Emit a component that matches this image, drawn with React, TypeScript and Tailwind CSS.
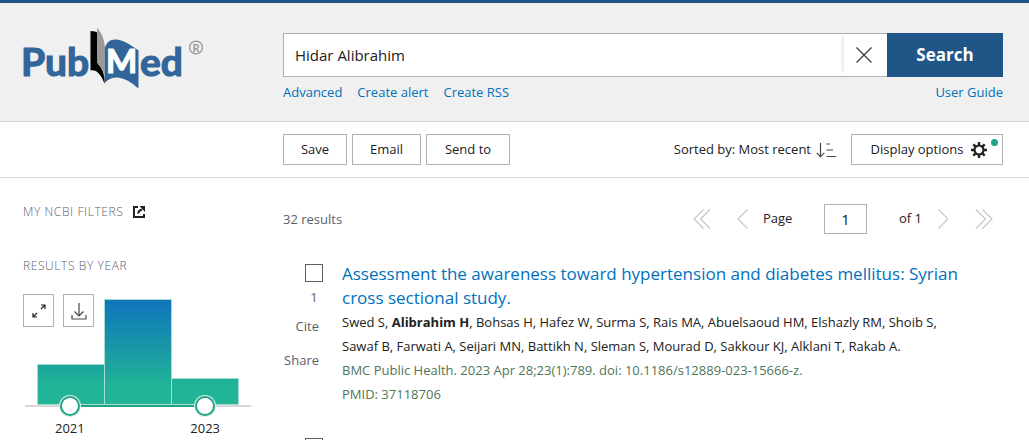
import { useState } from "react";
import { clsx } from "clsx";

const YEARS = [
  { year: 2021, height: 40 },
  { year: 2022, height: 105 },
  { year: 2023, height: 26 },
];

const THUMB =
  "pointer-events-none absolute top-[102px] left-[37px] m-0 h-5 w-[155px] appearance-none bg-transparent [&::-webkit-slider-thumb]:pointer-events-auto [&::-webkit-slider-thumb]:size-5 [&::-webkit-slider-thumb]:appearance-none [&::-webkit-slider-thumb]:rounded-full [&::-webkit-slider-thumb]:border-2 [&::-webkit-slider-thumb]:border-[#20a386] [&::-webkit-slider-thumb]:bg-white [&::-webkit-slider-thumb]:shadow-[0_0_0_1px_#d5eee8]";

const Logo = () => (
  <svg width="188" height="62" viewBox="18 27 188 62" aria-label="PubMed">
    <g fontFamily="Lato, sans-serif" fontWeight="700">
      <text x="21" y="76" fontSize="39" fill="#326599" stroke="#326599" strokeWidth="1.200">
        Pub
      </text>
      <text x="140" y="76" fontSize="39" fill="#326599" stroke="#326599" strokeWidth="1.200">
        ed
      </text>
      <path
        d="M104.500 50C106 41 112 38.500 119 40C127 42 132 46 138.500 50.500V88.500C128 79 115 72 104.500 83Z"
        fill="#326599"
      />
      <text x="106" y="73" fontSize="33" fill="#fff" stroke="#fff" strokeWidth="1.200">
        M
      </text>
      <path d="M90.500 31Q96 31 98 33V64C102 68 105 74 104.500 84C102 76 97 69 90.500 70.500Z" fill="#000" />
      <path d="M97 28C102 33 104 39 105 48V76C103 70 100 65 97 63Z" fill="#999" />
      <circle cx="196" cy="47.500" r="6.400" fill="none" stroke="#999" strokeWidth="1.300" />
      <text x="192.500" y="51.500" fontSize="11" fill="#999">
        R
      </text>
    </g>
  </svg>
);

const Header = () => {
  const [term, setTerm] = useState("Hidar Alibrahim");

  return (
    <header className="grid grid-cols-[260px_1fr] border-t-3 border-b border-t-[#205588] border-b-[#d6d7d9] bg-[#f0f0f0] pr-[26px] pb-[18px] pl-[23px]">
      <a href="#home" className="-ml-[5px] pt-6">
        <Logo />
      </a>
      <div className="pt-[30px]">
        <form className="flex h-11" onSubmit={(e) => e.preventDefault()}>
          <div className="flex min-w-0 flex-1 border border-r-0 border-[#aeb0b5] bg-white">
            <input
              aria-label="Search PubMed"
              value={term}
              onChange={(e) => setTerm(e.target.value)}
              className="min-w-0 flex-1 px-[11px] text-[15px] outline-none"
            />
            <button
              type="button"
              aria-label="Clear search"
              onClick={() => setTerm("")}
              className="flex w-[43px] items-center justify-center pr-1 shadow-[-4px_0_4px_-3px_#ddd]"
            >
              <svg width="16" height="16" viewBox="0 0 16 16" stroke="#323a45" strokeWidth="1.200">
                <path d="M.5.5l15 15M15.500.5l-15 15" />
              </svg>
            </button>
          </div>
          <button className="w-[116px] bg-[#205588] text-[17px] font-bold text-white">Search</button>
        </form>
        <nav className="mt-1 flex gap-[15px] text-[13px] leading-[22px] text-[#0071bc]">
          <a href="#advanced">Advanced</a>
          <a href="#alert">Create alert</a>
          <a href="#rss">Create RSS</a>
          <a href="#guide" className="ml-auto">
            User Guide
          </a>
        </nav>
      </div>
    </header>
  );
};

const ToolbarButton = ({ label, className }: { label: string; className: string }) => (
  <button className={clsx("h-[31px] border border-[#aeb0b5]", className)}>{label}</button>
);

const Gear = () => (
  <svg width="16" height="16" viewBox="-8 -8 16 16" fill="none" stroke="#212121">
    <circle r="4.500" strokeWidth="2.200" />
    <path
      strokeWidth="2.400"
      d="M0-5V-8M0 5V8M-5 0H-8M5 0H8M3.600-3.600L5.700-5.700M-3.600-3.600L-5.700-5.700M3.600 3.600L5.700 5.700M-3.600 3.600L-5.700 5.700"
    />
  </svg>
);

const Toolbar = () => (
  <div className="flex items-center gap-[5px] border-b border-[#d6d7d9] py-3 pr-[26px] pl-[283px] text-[13px]">
    <ToolbarButton label="Save" className="w-16" />
    <ToolbarButton label="Email" className="w-[69px]" />
    <ToolbarButton label="Send to" className="w-[84px]" />
    <button className="mr-[10px] ml-auto flex items-center gap-[5px]">
      Sorted by: Most recent
      <svg width="20" height="16" viewBox="0 0 20 16" fill="none" stroke="#444" strokeWidth="1.200">
        <path d="M4.500 1V14.500M.7 10.800L4.500 14.600L8.300 10.800M10.500 2H14M10.500 8H17M10.500 14.500H20" />
      </svg>
    </button>
    <button className="relative flex h-[31px] w-[152px] items-center justify-center gap-2 border border-[#aeb0b5] pl-1">
      Display options
      <Gear />
      <span className="absolute top-1 right-1 size-[7px] rounded-full bg-[#20a386]" />
    </button>
  </div>
);

const YearChart = () => {
  const [range, setRange] = useState([2021, 2023]);

  return (
    <div className="relative mt-[18px] w-[229px]">
      <svg width="229" height="120" viewBox="0 0 229 120" className="block">
        <defs>
          <linearGradient id="bars" gradientUnits="userSpaceOnUse" x1="0" y1="6" x2="0" y2="111">
            <stop offset="0" stopColor="#0f75bc" />
            <stop offset=".8" stopColor="#20b297" />
            <stop offset="1" stopColor="#22b796" />
          </linearGradient>
        </defs>
        {YEARS.map(({ year, height }, i) => (
          <rect
            key={year}
            x={14.5 + i * 67}
            y={110.5 - height}
            width="67"
            height={height}
            fill="url(#bars)"
            stroke="#a5dcd4"
          />
        ))}
        <path d="M2 112H228" stroke="#d6d7d9" strokeWidth="2" />
        <path d="M47 112H182" stroke="#20a386" strokeWidth="2" />
      </svg>
      <div className="absolute top-0 left-0 flex gap-[9px]">
        <button aria-label="Expand" className="flex h-[33px] w-[31px] items-center justify-center border border-[#aeb0b5]">
          <svg width="14" height="14" viewBox="0 0 14 14" fill="none" stroke="#212121" strokeWidth="1.200">
            <path d="M9 1H13V5M13 1L9 5M1 9V13H5M1 13L5 9" />
          </svg>
        </button>
        <button aria-label="Download" className="flex h-[33px] w-[31px] items-center justify-center border border-[#aeb0b5]">
          <svg width="16" height="18" viewBox="0 0 16 18" fill="none" stroke="#444" strokeWidth="1.200">
            <path d="M8 1V14M3.500 9.500L8 14L12.500 9.500M1 13V17H15V13" />
          </svg>
        </button>
      </div>
      <input
        type="range"
        aria-label="From year"
        min={2021}
        max={2023}
        value={range[0]}
        onChange={(e) => setRange([Number(e.target.value), range[1]])}
        className={THUMB}
      />
      <input
        type="range"
        aria-label="To year"
        min={2021}
        max={2023}
        value={range[1]}
        onChange={(e) => setRange([range[0], Number(e.target.value)])}
        className={THUMB}
      />
      <div className="flex justify-between pt-1 pr-8 pl-8 text-[13px] leading-5">
        <span>{range[0]}</span>
        <span>{range[1]}</span>
      </div>
    </div>
  );
};

const Sidebar = () => (
  <aside className="pt-6 text-[#5b616b]">
    <a href="#filters" className="flex items-center gap-[10px] text-[12px] leading-5 font-light tracking-wider">
      MY NCBI FILTERS
      <svg width="12" height="12" viewBox="0 0 12 12" fill="none" stroke="#212121" strokeWidth="2">
        <path d="M5 1H1V11H11V8" />
        <path d="M5 7.500Q5.500 4.500 9 3.500" />
        <path d="M6.500 0H12V6Z" fill="#212121" stroke="none" />
      </svg>
    </a>
    <h3 className="mt-[34px] text-[12px] leading-5 font-light tracking-wider">RESULTS BY YEAR</h3>
    <div className="text-[#212121]">
      <YearChart />
    </div>
  </aside>
);

const Arrow = ({ label, d, className }: { label: string; d: string; className: string }) => (
  <button aria-label={label} className={className}>
    <svg width="18" height="20" viewBox="0 0 18 20" fill="none" stroke="#c4c6ca" strokeWidth="1.200">
      <path d={d} />
    </svg>
  </button>
);

const Pager = () => (
  <div className="flex items-center text-[13px] text-[#212121]">
    <Arrow label="First page" d="M10.500.5L1 10L10.500 19.500M17 .5L7.500 10L17 19.500" className="mr-[26px]" />
    <Arrow label="Previous page" d="M10.500.5L1 10L10.500 19.500" className="mr-2" />
    <label htmlFor="page" className="w-[61px]">
      Page
    </label>
    <input
      id="page"
      defaultValue="1"
      className="h-[30px] w-[43px] border border-[#aeb0b5] text-center text-[15px] outline-none"
    />
    <span className="w-[63px] pr-2 text-right">of 1</span>
    <Arrow label="Next page" d="M8.500.5L18 10L8.500 19.500" className="mr-[27px]" />
    <Arrow label="Last page" d="M1 .5L10.500 10L1 19.500M7.500.5L17 10L7.500 19.500" className="mr-[10px]" />
  </div>
);

const CHECKBOX = "size-[18px] appearance-none border border-[#5b616b] bg-white checked:bg-[#205588]";

const Article = () => (
  <article className="mt-7 grid grid-cols-[40px_1fr] gap-x-[19px]">
    <div className="flex flex-col items-end pt-[2px] text-[13px] text-[#5b616b]">
      <input type="checkbox" id="result-1" className={CHECKBOX} />
      <label htmlFor="result-1" className="mt-[5px] w-[18px] text-center leading-5">
        1
      </label>
      <button className="mt-[9px] mr-1 leading-5">Cite</button>
      <button className="mt-[14px] mr-1 leading-5">Share</button>
    </div>
    <div>
      <h2 className="text-[17px] leading-6 text-[#0071bc]">
        <a href="#37118706">
          Assessment the awareness toward hypertension and diabetes mellitus: Syrian
          <br />
          cross sectional study.
        </a>
      </h2>
      <p className="text-[13px] leading-6 text-[#212121]">
        Swed S, <b>Alibrahim H</b>, Bohsas H, Hafez W, Surma S, Rais MA, Abuelsaoud HM, Elshazly RM, Shoib S,
        <br />
        Sawaf B, Farwati A, Seijari MN, Battikh N, Sleman S, Mourad D, Sakkour KJ, Alklani T, Rakab A.
      </p>
      <p className="text-[13px] leading-6 text-[#4d7657]">
        BMC Public Health. 2023 Apr 28;23(1):789. doi: 10.1186/s12889-023-15666-z.
        <br />
        PMID: 37118706
      </p>
    </div>
  </article>
);

export default function App() {
  return (
    <div className="h-screen overflow-hidden bg-white font-['Open_Sans',sans-serif] text-[#212121]">
      <Header />
      <Toolbar />
      <main className="grid grid-cols-[260px_1fr] pr-[26px] pl-[23px]">
        <Sidebar />
        <section className="pt-[26px]">
          <div className="flex items-center justify-between">
            <h3 className="pt-[2px] text-[13px] text-[#5b616b]">32 results</h3>
            <Pager />
          </div>
          <Article />
          <input type="checkbox" aria-label="Result 2" className={clsx("mt-8 ml-[22px] block", CHECKBOX)} />
        </section>
      </main>
    </div>
  );
}
